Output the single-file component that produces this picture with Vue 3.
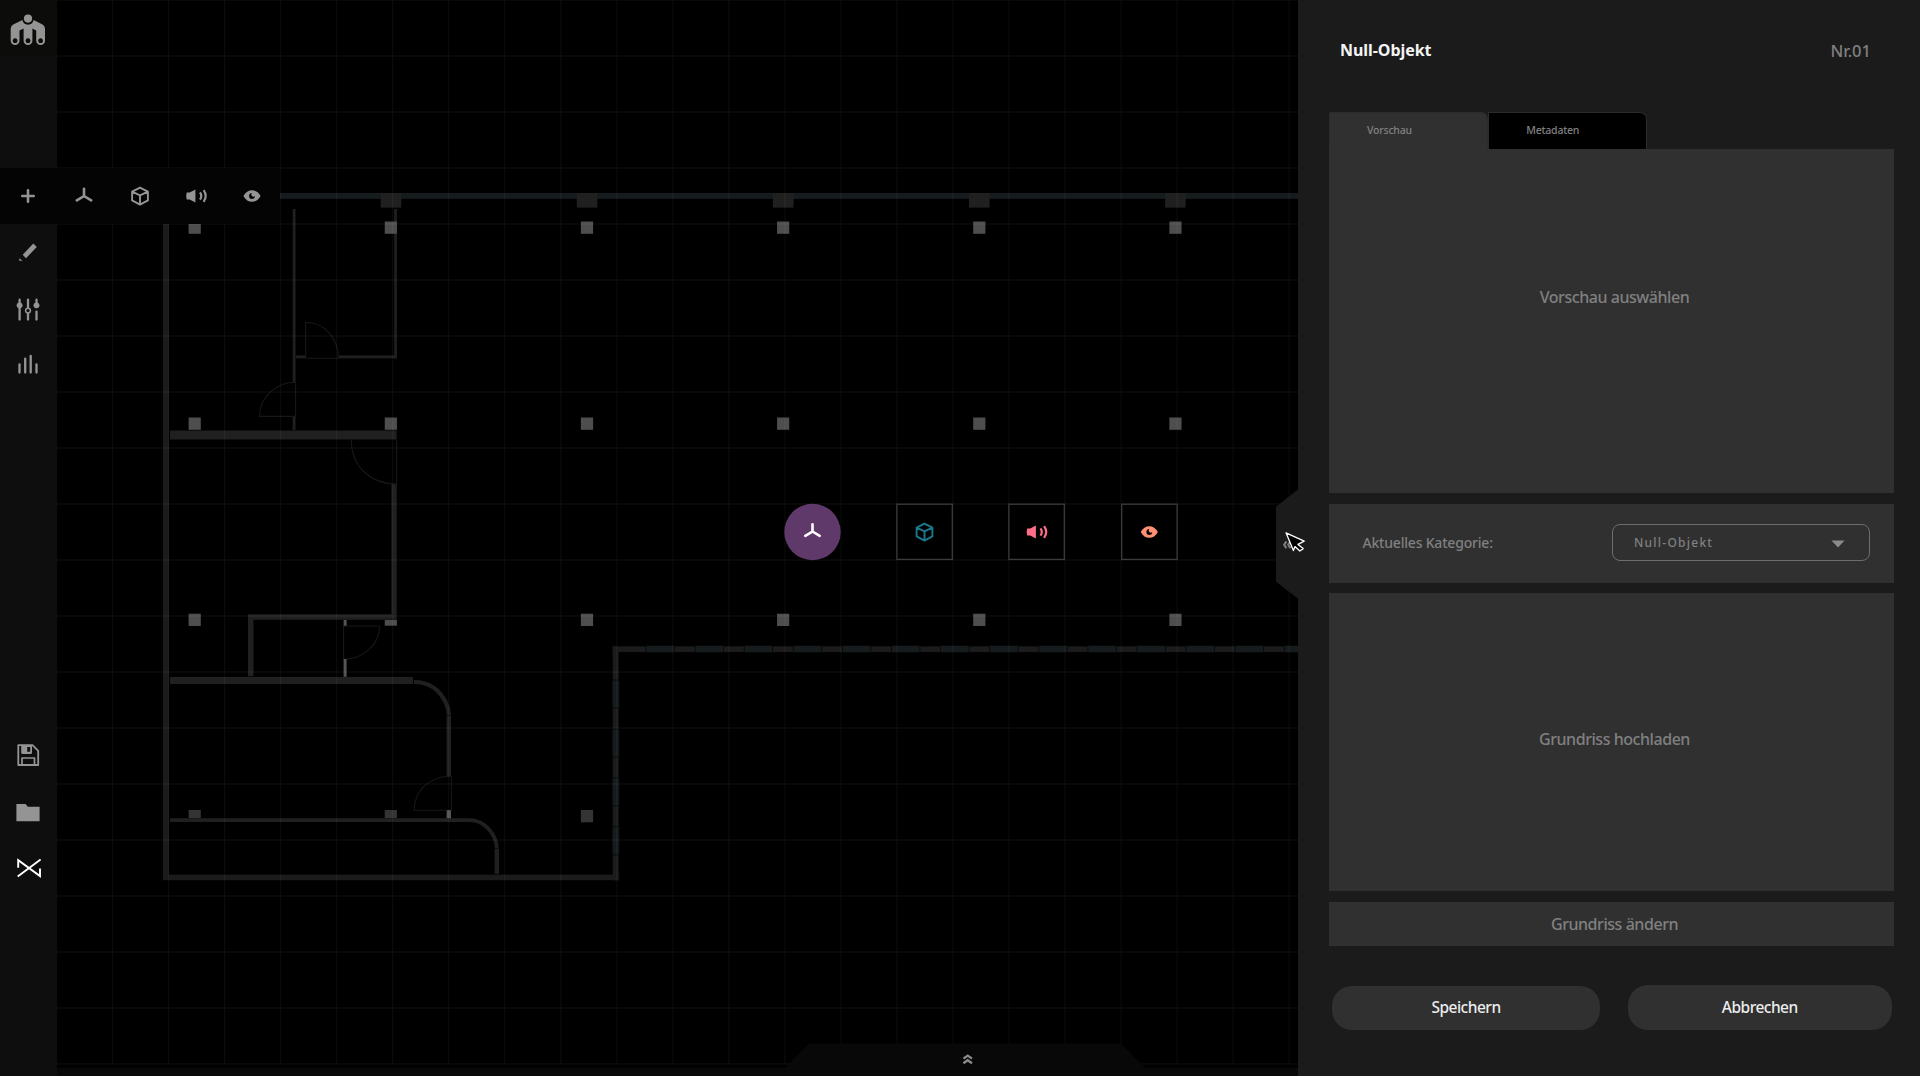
<script setup>
const range = (n) => Array.from({ length: n }, (_, i) => i)

const gridX = range(23).map((i) => 56.5 + i * 56.03)
const gridY = range(20).map((i) => i * 56)

const columnX = range(6).map((i) => 188.6 + i * 196.15)
const columns = []
for (const y of [221.5, 417.5]) for (const x of columnX) columns.push({ x, y, h: 12.3 })
columnX.forEach((x, i) => columns.push({ x, y: i === 1 ? 620 : 613.7, h: i === 1 ? 5.7 : 12.3 }))

const lowerColumns = [
  { x: columnX[0], h: 8 },
  { x: columnX[1], h: 8 },
  { x: columnX[2], h: 12.3 },
]
const pillars = range(5).map((i) => 380.7 + i * 196.1)
const windowsH = range(14).map((i) => 646 + i * 49.1)
const windowsV = range(4).map((i) => 680 + i * 48.9)

const slots = [
  { x: 896.6, icon: 'cube', color: '#19788e' },
  { x: 1008.6, icon: 'sound', color: '#ff6d86' },
  { x: 1121.4, icon: 'eye', color: '#ff9073' },
]
const tools = ['plus', 'axis', 'cube', 'sound', 'eye']
</script>

<template>
  <div class="app">
    <svg class="defs" width="0" height="0">
      <symbol id="plus" viewBox="-14 -14 28 28">
        <path d="M-5.7 0H5.7M0-5.7V5.7" fill="none" stroke="currentColor" stroke-width="2.6" stroke-linecap="round" />
      </symbol>
      <symbol id="axis" viewBox="-14 -14 28 28">
        <path d="M0-7.2V0L-7.2 4.4M0 0L7.2 4.4" fill="none" stroke="currentColor" stroke-width="2.6" stroke-linecap="round" />
      </symbol>
      <symbol id="cube" viewBox="-14 -14 28 28">
        <path d="M0-8.4L7.9-4.3V4.4L0 8.6L-7.9 4.4V-4.3ZM-7.9-4.3L0-.7L7.9-4.3M0-.7V8.6" fill="none" stroke="currentColor" stroke-width="1.9" stroke-linejoin="round" />
      </symbol>
      <symbol id="sound" viewBox="-14 -14 28 28">
        <path d="M-9.3-3.6H-6.3L-.6-6.4V6.4L-6.3 3.6H-9.3Q-10.4 0-9.3-3.6Z" fill="currentColor" />
        <path d="M4-3.6Q6.6 0 4 3.6M7.6-5.8Q11.8 0 7.6 5.8" fill="none" stroke="currentColor" stroke-width="2.2" />
      </symbol>
      <symbol id="eye" viewBox="-14 -14 28 28">
        <path fill-rule="evenodd" d="M-8.6 0C-4.6-7.8 4.6-7.8 8.6 0C4.6 7.8-4.6 7.8-8.6 0ZM0-2.9A2.9 2.9 0 1 0 2.9 0A1.7 1.7 0 0 1 0-2.9Z" fill="currentColor" />
      </symbol>
    </svg>

    <main class="stage">
      <svg class="plan" width="1920" height="1076" viewBox="0 0 1920 1076">
        <rect x="280" y="193" width="1020" height="5.8" fill="#161c1e" />
        <g fill="#202020">
          <rect v-for="x in pillars" :key="x" :x="x" y="193" width="20.6" height="14.6" />
        </g>

        <g fill="#1b1b1b">
          <rect x="163" y="200" width="5.8" height="680" />
          <rect x="163" y="874.6" width="455.7" height="5.6" />
          <rect x="612.7" y="646.3" width="6" height="234" />
          <rect x="612.7" y="646.3" width="690" height="5.8" />
        </g>
        <g fill="#161c1e" stroke="#060606" stroke-width=".8">
          <rect v-for="x in windowsH" :key="x" :x="x" y="645.6" width="28.4" height="7" />
          <rect v-for="y in windowsV" :key="y" x="612.2" :y="y" width="7" height="28.2" />
        </g>

        <g fill="#202020">
          <path d="M292.7 209h2.8v173h-2.8zM292.7 416h2.8v14h-2.8zM394.2 209h2.7v149.5h-2.7z" />
          <path d="M296 355.4h9.6v2.8H296zM338.6 355.4h58v2.8h-58z" />
          <path d="M170 430.5h226.7v9H170z" />
          <path d="M391.4 484h5.4v130h-5.4zM248 614.3h148.7v5.5H248zM248 614.3h5.5v62H248z" />
          <path d="M170 677h243v7H170zM446.6 715.5h4.4v61h-4.4z" />
          <path d="M494.6 849h4.4v24.8h-4.4z" />
        </g>
        <g fill="none" stroke="#202020" stroke-width="4.2">
          <path d="M414 682Q436 682 446 703Q448.8 709 448.8 715" />
          <path d="M170 820.2H469Q484 820.2 493 835Q496.8 842 496.8 848.6" stroke-width="3.8" />
        </g>
        <g fill="none" stroke="#171717" stroke-width="1.1">
          <path d="M305.6 358V322.3C324 322.3 338.4 338 338.4 358.3H305.6" />
          <path d="M295.6 382.3C276 382.3 259.6 397 259.6 416.4H295.6Z" />
          <path d="M351.3 440C351.3 466 370 484 396.6 484V440" />
          <path d="M343.6 626H379.6C379.6 644 364 659.4 343.6 659.4Z" />
          <path d="M451.4 776.3C430 776.3 414.2 790 414.2 810.2H451.4Z" />
        </g>
        <g fill="#555">
          <path d="M343.6 620h3v5.7h-3zM343.6 659h3v17.7h-3zM446.6 810.3h4.4v8h-4.4z" />
        </g>

        <g fill="#4e4e4e">
          <rect v-for="(c, i) in columns" :key="i" :x="c.x" :y="c.y" width="12.2" :height="c.h" />
        </g>
        <g fill="#343434">
          <rect v-for="c in lowerColumns" :key="c.x" :x="c.x" y="810" width="12.2" :height="c.h" />
        </g>

        <g stroke="#fff" stroke-opacity=".045" stroke-width="1.2">
          <line v-for="x in gridX" :key="x" :x1="x" :x2="x" y1="0" y2="1064" />
          <line v-for="y in gridY" :key="y" x1="56" x2="1298" :y1="y" :y2="y" stroke-width="1.6" />
        </g>

        <rect x="0" y="1067.6" width="1920" height="9" fill="#080808" />
        <path d="M785 1068L809 1043.6H1121L1145 1068Z" fill="#080808" />
        <path d="M963.4 1058.6L967.7 1055.6L972 1058.6M963.4 1063.2L967.7 1060.2L972 1063.2" fill="none" stroke="#8c8c8c" stroke-width="2.3" />

        <circle cx="812.5" cy="532" r="28.2" fill="#5e3969" />
        <use href="#axis" x="798.5" y="517.5" width="28" height="28" color="#fff" />
        <g v-for="s in slots" :key="s.icon">
          <rect :x="s.x + 0.3" y="504.2" width="55.4" height="55.2" fill="#000" stroke="#3b3b3b" stroke-width="1.3" />
          <use :href="'#' + s.icon" :x="s.x + 13.9" y="518" width="28" height="28" :color="s.color" />
        </g>
      </svg>
    </main>

    <nav class="sidebar">
      <div class="logo">
        <svg width="56" height="56" viewBox="0 0 56 56">
          <path fill="#949494" fill-rule="evenodd" d="M22.4 20A5.7 5.7 0 0 0 33.6 20L42.5 24.4Q45 25.8 45 28.5V40.7A4.4 4.4 0 0 1 36.2 40.7V30.4L32.4 28.4V40.7A4.4 4.4 0 0 1 23.6 40.7V28.4L19.5 30.4V40.7A4.4 4.4 0 0 1 10.7 40.7V28.5Q10.7 25.8 13.2 24.4ZM15.1 38.3a2.4 2.4 0 1 0 .01 0ZM28 38.3a2.4 2.4 0 1 0 .01 0ZM40.6 38.3a2.4 2.4 0 1 0 .01 0Z" />
          <circle cx="28" cy="18.6" r="4.1" fill="#949494" />
        </svg>
      </div>
      <div class="toolbar">
        <div v-for="t in tools" :key="t" class="tool">
          <svg width="28" height="28"><use :href="'#' + t" /></svg>
        </div>
      </div>
      <div class="item">
        <svg width="56" height="56" viewBox="0 0 56 56">
          <path d="M22.7 30.8L33.3 19.6L36.8 23L26 34.2ZM19.3 34.3L22.6 36.7L19.3 36.7Z" fill="currentColor" />
        </svg>
      </div>
      <div class="item">
        <svg width="56" height="56" viewBox="0 0 56 56" fill="none" stroke="currentColor" stroke-width="2.3" stroke-linecap="round">
          <path d="M19.6 19.7V39.5M28 19.7V27.4M28 33.8V39.5M36.5 19.7V25M36.5 31.6V39.5" />
          <circle cx="28" cy="30.6" r="2.4" stroke-width="1.5" />
          <path d="M19.6 22.2l2.9 3-2.9 3-2.9-3zM36.5 22.2l2.9 3-2.9 3-2.9-3z" fill="currentColor" stroke="none" />
          <circle cx="19.6" cy="25.3" r="2.9" fill="currentColor" stroke="none" />
          <circle cx="36.5" cy="25.3" r="2.9" fill="currentColor" stroke="none" />
        </svg>
      </div>
      <div class="item">
        <svg width="56" height="56" viewBox="0 0 56 56" stroke="currentColor" stroke-width="2.3" stroke-linecap="round">
          <path d="M19.5 28.3V36.5M25.2 22.7V36.5M30.7 19.8V36.5M36.5 28.3V36.5" />
        </svg>
      </div>
      <div class="spacer"></div>
      <div class="item">
        <svg width="56" height="56" viewBox="0 0 56 56" fill="none" stroke="currentColor" stroke-width="1.8" stroke-linejoin="round">
          <path d="M18.3 17.2H32.5L38.2 22.9V37H18.3Z" />
          <path d="M22 36.7V30H34.5V36.7" stroke-width="1.7" />
          <path fill="currentColor" fill-rule="evenodd" stroke="none" d="M21.2 17.2H32V24.5Q32 26 30.5 26H22.7Q21.2 26 21.2 24.5ZM27.2 19V23.8H30.2V19Z" />
        </svg>
      </div>
      <div class="item">
        <svg width="56" height="56" viewBox="0 0 56 56">
          <path d="M16.4 20.1H25.6L27.8 22.8H39.6V37.3H16.4Z" fill="currentColor" />
        </svg>
      </div>
      <div class="item active">
        <svg width="56" height="56" viewBox="0 0 56 56" fill="none" stroke="currentColor" stroke-width="1.9">
          <path d="M17.7 36.5L40.6 19.4M18.2 27.8V20.2L40 36.1V28.4" />
        </svg>
      </div>
    </nav>

    <aside class="panel">
      <header class="head">
        <h1 class="t-title">Null-Objekt</h1>
        <span class="t-number">Nr.01</span>
      </header>
      <div class="tabs">
        <div class="tab current">Vorschau</div>
        <div class="tab">Metadaten</div>
      </div>
      <section class="box preview"><span>Vorschau auswählen</span></section>
      <section class="box category">
        <label>Aktuelles Kategorie:</label>
        <div class="select">
          <span>Null-Objekt</span>
          <svg width="14" height="8" viewBox="0 0 14 8"><path d="M.5.5H13.5L7 7.4Z" fill="#8b8b8b" /></svg>
        </div>
      </section>
      <section class="box upload"><span>Grundriss hochladen</span></section>
      <button class="box change"><span>Grundriss ändern</span></button>
      <footer class="actions">
        <button class="save"><span>Speichern</span></button>
        <button class="cancel"><span>Abbrechen</span></button>
      </footer>
    </aside>

    <svg class="handle" width="40" height="112" viewBox="0 0 40 112">
      <path d="M22.5 1L0 18.8V93.8L22.5 111Z" fill="#1b1b1b" />
      <path d="M10.4 53.4L8.2 56.8L10.4 60.2M14.4 53.4L12.2 56.8L14.4 60.2" fill="none" stroke="#808080" stroke-width="2.1" />
      <path d="M10 44.8L28.2 53.2L22 56.4L27.2 60.6L23.8 63L19 58.6L17.4 62.6Z" fill="#000" stroke="#fff" stroke-width="1.3" stroke-linejoin="round" />
    </svg>
  </div>
</template>

<style>
body {
  margin: 0;
  background: #000;
  overflow: hidden;
}
</style>

<style scoped>
.app {
  position: relative;
  display: flex;
  justify-content: space-between;
  width: 1920px;
  height: 1076px;
  overflow: hidden;
  background: #000;
  font-family: "Noto Sans", "Open Sans", sans-serif;
}
.defs,
.stage {
  position: absolute;
  left: 0;
  top: 0;
}
.plan {
  display: block;
}
.sidebar {
  position: relative;
  display: flex;
  flex-direction: column;
  width: 56.6px;
  height: 1076px;
  box-sizing: border-box;
  padding-bottom: 180px;
  background: #0e0e0e;
  color: #949494;
}
.sidebar svg {
  display: block;
}
.logo {
  height: 56px;
  margin-bottom: 111.5px;
  background: #0c0c0a;
}
.toolbar {
  display: flex;
  flex: none;
  width: 280.3px;
  height: 56.5px;
  background: #040404;
}
.tool {
  display: flex;
  flex: none;
  align-items: center;
  justify-content: center;
  width: 56px;
}
.item {
  flex: none;
  height: 56px;
}
.spacer {
  flex: 1;
}
.active {
  color: #fff;
}
.panel {
  position: relative;
  display: flex;
  flex-direction: column;
  box-sizing: border-box;
  width: 622.4px;
  height: 1076px;
  padding: 0 26px 0 31.4px;
  background: #1b1b1b;
  color: #808080;
}
.head {
  display: flex;
  align-items: center;
  justify-content: space-between;
  height: 100px;
  margin-bottom: 12px;
  padding: 0 23px 0 11px;
}
h1 {
  margin: 0;
}
.t-title {
  color: #f4f4f4;
  font-size: 16px;
  font-weight: 700;
  letter-spacing: -0.05px;
}
.t-number {
  font-size: 16.5px;
  font-weight: 500;
}
.tabs {
  display: flex;
  height: 37px;
}
.tab {
  display: flex;
  align-items: center;
  box-sizing: border-box;
  width: 159.2px;
  padding: 0 0 2px 37px;
  border: 1px solid #2c2c2c;
  border-bottom: 0;
  border-radius: 0 7px 0 0;
  background: #000;
  font-size: 10.5px;
  font-weight: 500;
  letter-spacing: -0.2px;
}
.tab.current {
  background: #303030;
}
.box {
  flex: none;
  display: flex;
  align-items: center;
  justify-content: center;
  box-sizing: border-box;
  border: 0;
  background: #303030;
  color: #808080;
  font: 500 16px "Noto Sans", sans-serif;
  letter-spacing: -0.45px;
}
.preview {
  height: 344.3px;
  padding: 0 0 48px 6px;
}
.category {
  justify-content: space-between;
  height: 79px;
  margin: 10.5px 0;
  padding: 0 24px 2px 33.5px;
  font-size: 14px;
  letter-spacing: -0.2px;
}
.select {
  display: flex;
  align-items: center;
  justify-content: space-between;
  box-sizing: border-box;
  width: 258px;
  height: 37px;
  padding: 0 24px 0 21px;
  border: 1.5px solid #6d6d6d;
  border-radius: 8px;
  font-size: 12px;
  letter-spacing: 1.25px;
}
.select svg {
  margin-top: 3px;
}
.upload {
  height: 297.4px;
  padding: 0 0 6px 6px;
}
.change {
  width: 100%;
  height: 44px;
  margin-top: 11.4px;
  padding: 0 0 0 6px;
}
.actions {
  display: flex;
  align-items: center;
  justify-content: space-between;
  height: 45px;
  margin: 39px 2px 0 3px;
}
.actions button {
  height: 44px;
  padding: 0 0 1px;
  border: 0;
  border-radius: 20px;
  background: #303030;
  color: #ececec;
  font: 500 15.5px "Noto Sans", sans-serif;
  letter-spacing: -0.5px;
}
.actions .save {
  width: 268px;
}
.actions .cancel {
  width: 264.5px;
  height: 45px;
  padding-bottom: 2px;
}
.handle {
  position: absolute;
  left: 1276px;
  top: 487.5px;
}
</style>
